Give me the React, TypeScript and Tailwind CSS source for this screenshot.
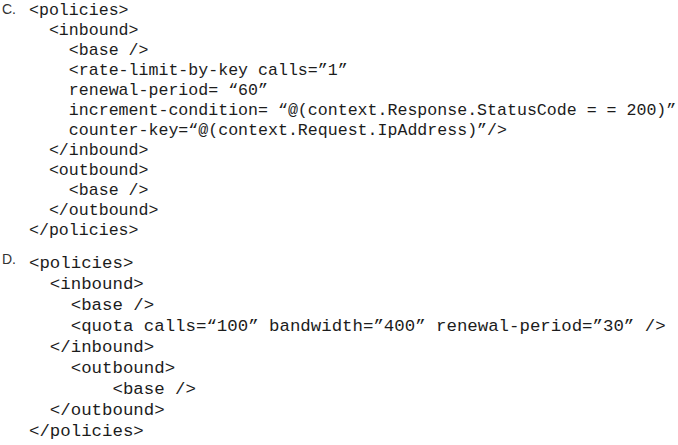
export default function App() {
  const c = [
    "<policies>",
    "  <inbound>",
    "    <base />",
    "    <rate-limit-by-key calls=\u201d1\u201d",
    "    renewal-period= \u201c60\u201d",
    "    increment-condition= \u201c@(context.Response.StatusCode = = 200)\u201d",
    "    counter-key=\u201c@(context.Request.IpAddress)\u201d/>",
    "  </inbound>",
    "  <outbound>",
    "    <base />",
    "  </outbound>",
    "</policies>",
  ];
  const d = [
    "<policies>",
    "  <inbound>",
    "    <base />",
    "    <quota calls=\u201c100\u201d bandwidth=\u201d400\u201d renewal-period=\u201d30\u201d />",
    "  </inbound>",
    "    <outbound>",
    "        <base />",
    "  </outbound>",
    "</policies>",
  ];

  return (
    <div className="w-[678px] h-[445px] bg-white text-[#1c1c1c] overflow-hidden">
      {/* option C */}
      <div className="flex items-start pt-[1px]">
        <span className="w-[29px] pl-[2px] font-['Liberation_Sans',Arial,sans-serif] text-[14px] leading-[16px] text-[#333]">
          C.
        </span>
        <pre className="font-['Liberation_Mono','Courier_New',monospace] text-[16.6px] leading-[20px] whitespace-pre">
          {c.join("\n")}
        </pre>
      </div>

      {/* option D */}
      <div className="flex items-start mt-[12px]">
        <span className="w-[29px] pl-[2px] -mt-[2px] font-['Liberation_Sans',Arial,sans-serif] text-[14px] leading-[16px] text-[#333]">
          D.
        </span>
        <pre className="font-['Liberation_Mono','Courier_New',monospace] text-[17.4px] leading-[21px] whitespace-pre">
          {d.join("\n")}
        </pre>
      </div>
    </div>
  );
}
